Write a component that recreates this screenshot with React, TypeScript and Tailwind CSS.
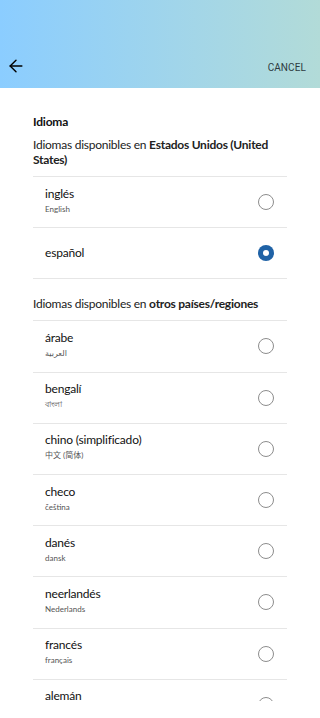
import { ArrowLeft } from 'lucide-react';

type Lang = { name: string; native?: string; selected?: boolean };

const US_LANGS: Lang[] = [
  { name: 'inglés', native: 'English' },
  { name: 'español', selected: true },
];

const OTHER_LANGS: Lang[] = [
  { name: 'árabe', native: 'العربية' },
  { name: 'bengalí', native: 'বাংলা' },
  { name: 'chino (simplificado)', native: '中文 (简体)' },
  { name: 'checo', native: 'čeština' },
  { name: 'danés', native: 'dansk' },
  { name: 'neerlandés', native: 'Nederlands' },
  { name: 'francés', native: 'français' },
  { name: 'alemán', native: 'Deutsch' },
  { name: 'griego', native: 'Ελληνικά' },
];

function Radio({ selected }: { selected?: boolean }) {
  if (selected) {
    return (
      <span className="flex h-[16px] w-[16px] items-center justify-center rounded-full bg-[#1f62a6]">
        <span className="h-[6px] w-[6px] rounded-full bg-white" />
      </span>
    );
  }
  return <span className="h-[16px] w-[16px] rounded-full border border-[#8d8d8d]" />;
}

function LangRow({ lang }: { lang: Lang }) {
  return (
    <div className="flex h-[51.2px] shrink-0 items-center justify-between border-t border-[#e6e6e6] pl-[12px] pr-[13px]">
      <div className={`flex flex-col ${lang.native ? 'pb-[3px]' : ''}`}>
        <span className="text-[12px] leading-[16px] tracking-[-0.2px] text-[#111]">{lang.name}</span>
        {lang.native && (
          <span className="mt-[1px] text-[8px] leading-[13px] text-[#555]">{lang.native}</span>
        )}
      </div>
      <Radio selected={lang.selected} />
    </div>
  );
}

export default function App() {
  return (
    <div
      className="flex h-[718px] w-[320px] flex-col overflow-hidden bg-white"
      style={{ fontFamily: 'Lato, "Noto Sans CJK SC", "DejaVu Sans", sans-serif' }}
    >
      <header className="flex h-[88px] shrink-0 items-end justify-between bg-gradient-to-r from-[#8bcdff] to-[#b2dbd8] pb-[12px] pl-[6px] pr-[14px]">
        <ArrowLeft className="h-[20px] w-[20px] text-black" strokeWidth={1.7} />
        <span
          className="mb-[1px] text-[10px] tracking-[0.1px] text-[#2d3a3f]"
          style={{ fontFamily: 'Roboto, sans-serif' }}
        >
          CANCEL
        </span>
      </header>

      <div className="h-[613px] shrink-0 overflow-hidden px-[33px]">
        <p className="pt-[26px] text-[12px] font-bold leading-[16px] tracking-[-0.2px] text-[#111]">
          Idioma
        </p>
        <p className="mt-[7px] pb-[9px] text-[12px] leading-[15px] tracking-[-0.25px] text-[#222]">
          Idiomas disponibles en <span className="font-bold">Estados Unidos (United States)</span>
        </p>
        <div className="border-b border-[#e6e6e6]">
          {US_LANGS.map((l) => (
            <LangRow key={l.name} lang={l} />
          ))}
        </div>

        <p className="mt-[17px] pb-[9px] text-[12px] leading-[15px] tracking-[-0.25px] text-[#222]">
          Idiomas disponibles en <span className="font-bold">otros países/regiones</span>
        </p>
        <div className="flex flex-col">
          {OTHER_LANGS.map((l) => (
            <LangRow key={l.name} lang={l} />
          ))}
        </div>
      </div>
    </div>
  );
}
